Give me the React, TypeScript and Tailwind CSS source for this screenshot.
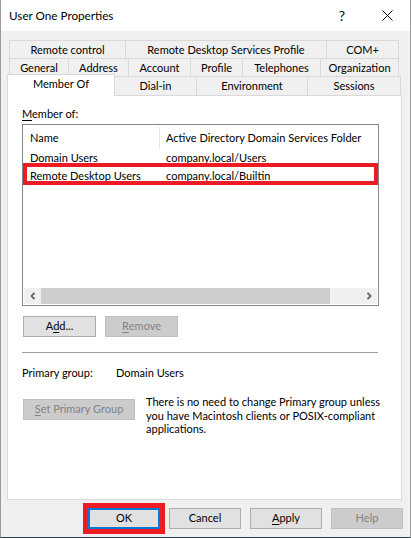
import React from "react";

function Btn({
  children,
  className = "",
  disabled = false,
}: {
  children: React.ReactNode;
  className?: string;
  disabled?: boolean;
}) {
  return (
    <div
      className={`h-[21px] flex items-center justify-center border whitespace-nowrap ${
        disabled
          ? "bg-[#cccccc] border-[#bfbfbf] text-[#838383]"
          : "bg-[#e1e1e1] border-[#adadad] text-black"
      } ${className}`}
    >
      {children}
    </div>
  );
}

function Chevron({ dir }: { dir: "l" | "r" }) {
  return (
    <svg width="6" height="8" viewBox="0 0 6 8">
      <polyline
        points={dir === "l" ? "4.5,0.8 1.5,4 4.5,7.2" : "1.5,0.8 4.5,4 1.5,7.2"}
        fill="none"
        stroke="#606060"
        strokeWidth="1.8"
      />
    </svg>
  );
}

export default function App() {
  return (
    <div className="w-[411px] h-[538px] bg-[#f0f0f0] flex flex-col border-l border-r border-b border-l-[#9a9a9a] border-r-[#9a9a9a] border-b-[#2b3f4c] font-['Lato',sans-serif] text-[11px] text-black overflow-hidden whitespace-nowrap">
      {/* Title bar */}
      <div className="h-[31px] bg-white flex items-center shrink-0">
        <div className="pl-[8px] text-[11.7px] leading-none">User One Properties</div>
        <div className="ml-auto flex items-center">
          <div className="w-[46px] flex justify-center text-[14px] leading-none pl-[2px]">?</div>
          <div className="w-[46px] flex justify-center">
            <svg width="11" height="11" viewBox="0 0 11 11">
              <line x1="0.5" y1="0.5" x2="10.5" y2="10.5" stroke="#000" strokeWidth="1" />
              <line x1="10.5" y1="0.5" x2="0.5" y2="10.5" stroke="#000" strokeWidth="1" />
            </svg>
          </div>
        </div>
      </div>

      {/* Tabs row 1 */}
      <div className="mt-[9px] ml-[8px] flex h-[18px]">
        <div className="w-[116px] pt-[2px] flex items-center justify-center border-t border-l border-[#d9d9d9]">Remote control</div>
        <div className="w-[201px] pt-[2px] flex items-center justify-center border-t border-l border-[#d9d9d9]">Remote Desktop Services Profile</div>
        <div className="w-[73px] pt-[2px] flex items-center justify-center border-t border-l border-r border-[#d9d9d9]">COM+</div>
      </div>
      {/* Tabs row 2 */}
      <div className="ml-[8px] flex h-[18px]">
        <div className="w-[59px] pt-[1px] flex items-center justify-center border-t border-l border-[#d9d9d9]">General</div>
        <div className="w-[60px] pt-[1px] flex items-center justify-center border-t border-l border-[#d9d9d9]">Address</div>
        <div className="w-[62px] pt-[1px] flex items-center justify-center border-t border-l border-[#d9d9d9]">Account</div>
        <div className="w-[52px] pt-[1px] flex items-center justify-center border-t border-l border-[#d9d9d9]">Profile</div>
        <div className="w-[78px] pt-[1px] flex items-center justify-center border-t border-l border-[#d9d9d9]">Telephones</div>
        <div className="w-[79px] pt-[1px] flex items-center justify-center border-t border-l border-r border-[#d9d9d9]">Organization</div>
      </div>
      {/* Tabs row 3 */}
      <div className="ml-[6px] flex items-end h-[19px] relative z-10">
        <div className="w-[108px] h-[22px] mb-[-1px] bg-white flex items-center justify-center border-t border-l border-r border-[#d9d9d9] pb-[3px]">
          Member Of
        </div>
        <div className="w-[81px] h-full flex items-center justify-center border-t border-[#d9d9d9]">Dial-in</div>
        <div className="w-[111px] h-full flex items-center justify-center border-t border-l border-[#d9d9d9]">Environment</div>
        <div className="w-[94px] h-full flex items-center justify-center border-t border-l border-r border-[#d9d9d9]">Sessions</div>
      </div>

      {/* Panel */}
      <div className="ml-[6px] w-[395px] h-[405px] shrink-0 border border-[#d9d9d9] bg-white flex flex-col pl-[14px]">
        <div className="mt-[11px] leading-[14px]">
          <u className="underline-offset-[2px]">M</u>ember of:
        </div>

        {/* List box */}
        <div className="mt-[3px] w-[357px] h-[182px] shrink-0 border border-[#828790] bg-white p-[1px] flex flex-col">
          <div className="h-[23px] flex">
            <div className="w-[135px] pl-[6px] pt-[2px] flex items-center">Name</div>
            <div className="w-px bg-[#e5e5e5] mt-[1px]" />
            <div className="pl-[6px] pt-[2px] flex items-center">Active Directory Domain Services Folder</div>
          </div>
          <div className="h-[18px] pt-[1px] flex items-center">
            <div className="w-[136px] pl-[6px]">Domain Users</div>
            <div className="pl-[6px]">company.local/Users</div>
          </div>
          <div className="h-[18px] pt-[1px] flex items-center relative">
            <div className="w-[136px] pl-[6px]">Remote Desktop Users</div>
            <div className="pl-[6px]">company.local/Builtin</div>
            <div className="absolute left-[-1px] right-[-1px] top-[-4px] bottom-0 border-[4px] border-[#ed1c24]" />
          </div>
          <div className="flex-1" />
          <div className="h-[16px] flex">
            <div className="w-[17px] bg-[#f0f0f0] flex items-center justify-center">
              <Chevron dir="l" />
            </div>
            <div className="w-[289px] bg-[#cdcdcd]" />
            <div className="flex-1 bg-[#f0f0f0]" />
            <div className="w-[17px] bg-[#f0f0f0] flex items-center justify-center">
              <Chevron dir="r" />
            </div>
          </div>
        </div>

        {/* Add / Remove */}
        <div className="mt-[10px] ml-[1px] flex gap-[9px]">
          <Btn className="w-[73px]">
            A<u className="underline-offset-[2px]">d</u>d...
          </Btn>
          <Btn className="w-[73px]" disabled>
            <u className="underline-offset-[2px]">R</u>emove
          </Btn>
        </div>

        <div className="mt-[15px] w-[356px] h-px bg-[#a0a0a0]" />

        <div className="mt-[13px] flex leading-[14px]">
          <div className="w-[94px]">Primary group:</div>
          <div>Domain Users</div>
        </div>

        <div className="mt-[15px] flex">
          <Btn className="mt-[4px] ml-[1px] w-[112px]" disabled>
            <u className="underline-offset-[2px]">S</u>et Primary Group
          </Btn>
          <div className="ml-[11px] leading-[13.5px]">
            There is no need to change Primary group unless
            <br />
            you have Macintosh clients or POSIX-compliant
            <br />
            applications.
          </div>
        </div>
      </div>

      {/* Bottom buttons */}
      <div className="mt-[8px] flex justify-end pr-[7px] gap-[9px]">
        <div className="relative">
          <div className="w-[72px] h-[21px] flex items-center justify-center border-2 border-[#0078d7] bg-[#e1e1e1]">
            OK
          </div>
          <div className="absolute -inset-[5px] border-[5px] border-[#ed1c24]" />
        </div>
        <Btn className="w-[72px]">Cancel</Btn>
        <Btn className="w-[72px]">
          <u className="underline-offset-[2px]">A</u>pply
        </Btn>
        <Btn className="w-[72px]" disabled>
          Help
        </Btn>
      </div>
    </div>
  );
}
